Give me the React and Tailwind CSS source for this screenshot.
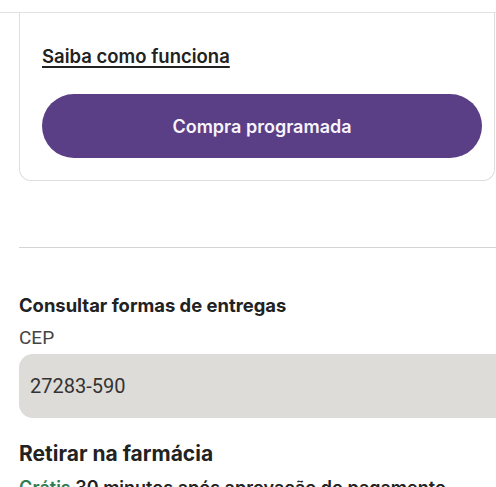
import React from "react";

export default function App() {
  return (
    <div className="w-[496px] h-[487px] overflow-hidden bg-white font-['Inter',sans-serif] text-[#222]">
      <div className="h-3" />

      {/* card */}
      <div className="border-t-[1.5px] border-[#e1e1e1]">
        <div className="ml-[19px] mr-px rounded-b-xl border-x border-b border-[#dedede] pl-[22px] pr-[12px] pt-[31px] pb-[22px]">
          <a href="#" className="block text-[18.5px] leading-6 font-semibold underline underline-offset-[3px] decoration-[1.5px]">
            Saiba como funciona
          </a>
          <button className="mt-[26px] w-full h-16 rounded-full bg-[#5b3f86] text-[#f7f4fb] text-[18px] font-semibold">
            Compra programada
          </button>
        </div>
      </div>

      <div className="ml-[19px] mt-[66px] border-t-[1.5px] border-[#d4d4d4]" />

      {/* delivery */}
      <div className="pl-[19px]">
        <h2 className="mt-[45px] text-[18.4px] leading-6 font-bold">Consultar formas de entregas</h2>
        <label className="block mt-[9px] text-[19px] leading-6 text-[#444] font-['Roboto',sans-serif]">CEP</label>
        <div className="mt-1 h-16 flex items-center rounded-l-[14px] bg-[#dddcd8] pl-[11px] text-[20px] text-[#333] font-['Roboto',sans-serif]">
          27283-590
        </div>
        <h3 className="mt-[22px] text-[21px] leading-7 font-bold">Retirar na farmácia</h3>
        <p className="mt-[8px] text-[18px] leading-6 font-semibold whitespace-nowrap">
          <span className="text-[#2e7d50]">Grátis</span> 30 minutos após aprovação do pagamento
        </p>
      </div>
    </div>
  );
}
